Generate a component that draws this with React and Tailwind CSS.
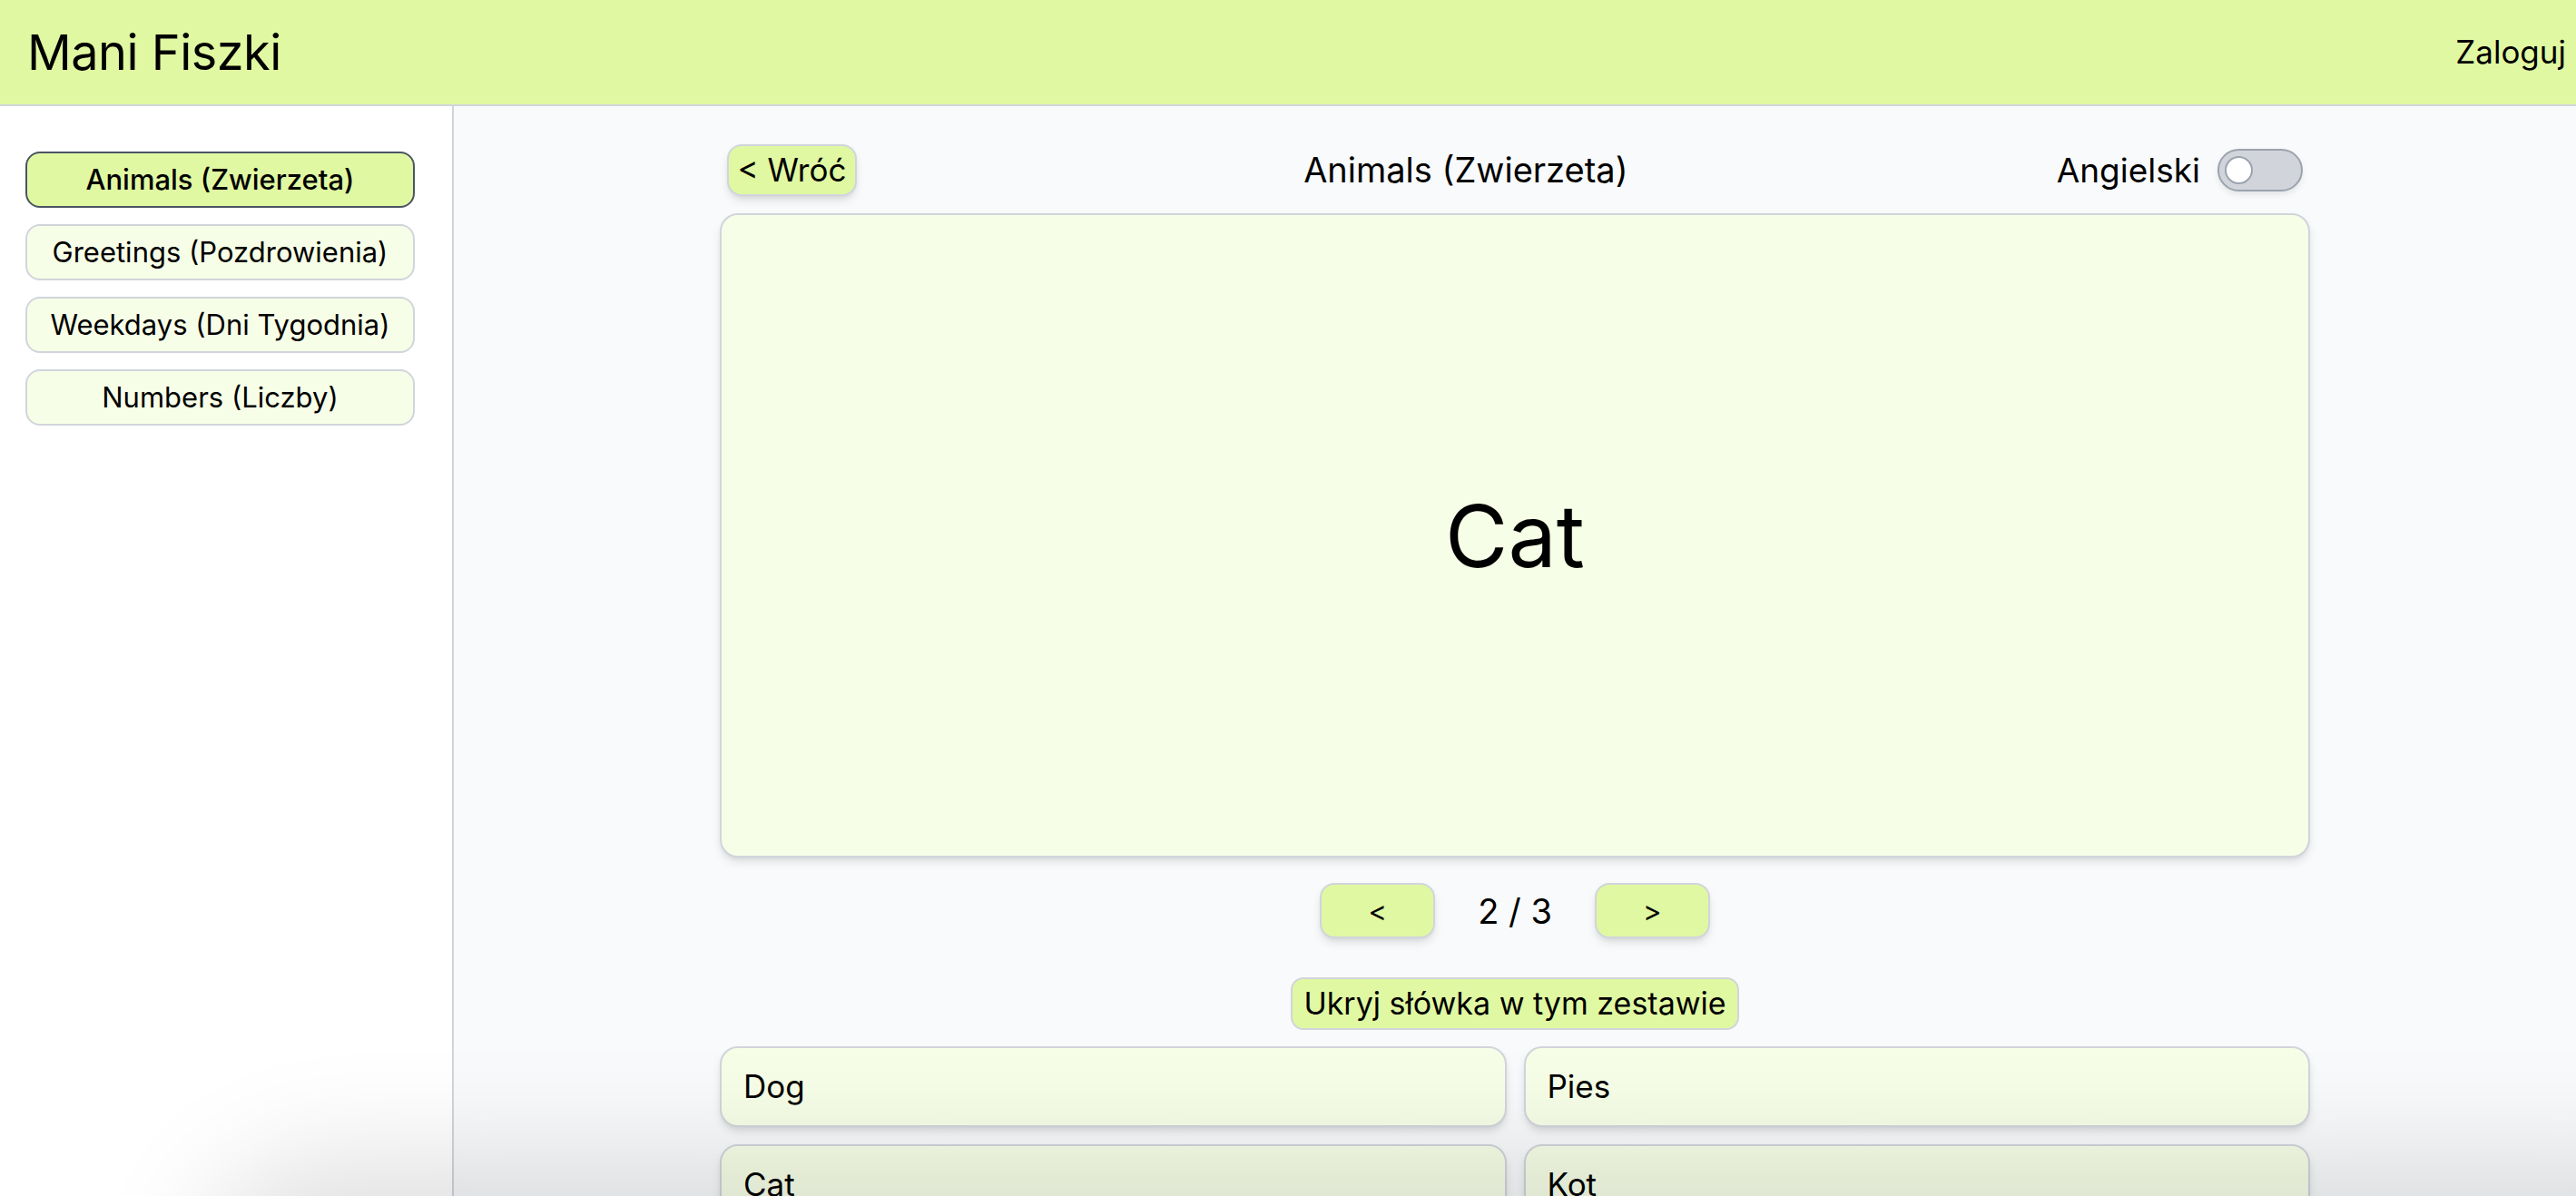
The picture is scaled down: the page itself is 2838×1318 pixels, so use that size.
import React from "react";

const sets = [
  { name: "Animals (Zwierzeta)", active: true },
  { name: "Greetings (Pozdrowienia)" },
  { name: "Weekdays (Dni Tygodnia)" },
  { name: "Numbers (Liczby)" },
];

const words = [
  ["Dog", "Pies"],
  ["Cat", "Kot"],
  ["Bird", "Ptak"],
];

export default function App() {
  return (
    <div className="font-['Inter',sans-serif] text-black min-h-screen bg-[#f9fafb] overflow-hidden">
      <header className="flex items-center justify-between h-[117px] border-b-2 border-[#d1d5db] bg-[#e0f8a2] pl-[30px] pr-[11px]">
        <h1 className="text-[54px] leading-none tracking-[-0.5px]">Mani Fiszki</h1>
        <button className="text-[35px] leading-none">Zaloguj</button>
      </header>
      <div className="flex min-h-[1201px]">
        <aside className="w-[500px] shrink-0 bg-white border-r-2 border-[#d1d5db] pt-[50px] pl-[28px] flex flex-col gap-[18px]">
          {sets.map((s) => (
            <button
              key={s.name}
              className={
                s.active
                  ? "w-[429px] h-[62px] rounded-[16px] border-2 border-[#4b5563] bg-[#e0f8a2] text-[31px] font-medium flex items-center justify-center"
                  : "w-[429px] h-[62px] rounded-[16px] border-2 border-[#d1d5db] bg-[#f7fee7] text-[31px] flex items-center justify-center"
              }
            >
              {s.name}
            </button>
          ))}
        </aside>
        <main className="flex-1 bg-[#f9fafb]">
          <div className="w-[1752px] mx-auto pt-[41px]">
            <div className="h-[58px] flex items-center justify-between px-[8px]">
              <button className="h-[57px] w-[143px] rounded-[16px] border-2 border-[#d1d5db] bg-[#e0f8a2] text-[35px] leading-none shadow-[0_6px_12px_-2px_rgba(0,0,0,0.12),0_3px_6px_-3px_rgba(0,0,0,0.1)]">
                &lt; Wróć
              </button>
              <h2 className="text-[38px] leading-none ml-[20px]">Animals (Zwierzeta)</h2>
              <div className="flex items-center gap-[19px]">
                <span className="text-[37px] leading-none">Angielski</span>
                <div className="w-[94px] h-[47px] rounded-full bg-[#d1d5db] border-2 border-[#9ca3af] flex items-center pl-[6px] shadow-[0_4px_8px_-2px_rgba(0,0,0,0.12)]">
                  <div className="w-[31px] h-[31px] rounded-full bg-white border-2 border-[#9ca3af]"></div>
                </div>
              </div>
            </div>
            <div className="mt-[19px] h-[710px] rounded-[20px] border-2 border-[#d1d5db] bg-[#f7fee7] flex items-center justify-center shadow-[0_6px_12px_-2px_rgba(0,0,0,0.12),0_3px_6px_-3px_rgba(0,0,0,0.1)]">
              <span className="text-[95px] leading-none">Cat</span>
            </div>
            <div className="mt-[28px] flex items-center justify-center gap-[47px]">
              <button className="w-[127px] h-[61px] rounded-[16px] border-2 border-[#d1d5db] bg-[#e0f8a2] text-[31px] leading-none shadow-[0_6px_12px_-2px_rgba(0,0,0,0.12),0_3px_6px_-3px_rgba(0,0,0,0.1)]">
                &lt;
              </button>
              <span className="text-[38px] leading-none">2 / 3</span>
              <button className="w-[127px] h-[61px] rounded-[16px] border-2 border-[#d1d5db] bg-[#e0f8a2] text-[31px] leading-none shadow-[0_6px_12px_-2px_rgba(0,0,0,0.12),0_3px_6px_-3px_rgba(0,0,0,0.1)]">
                &gt;
              </button>
            </div>
            <div className="mt-[43px] flex justify-center">
              <button className="h-[58px] w-[494px] rounded-[14px] border-2 border-[#d1d5db] bg-[#e0f8a2] text-[34px] leading-none">
                Ukryj słówka w tym zestawie
              </button>
            </div>
            <div className="mt-[18px] grid grid-cols-2 gap-[19px]">
              {words.map(([en, pl]) => (
                <React.Fragment key={en}>
                  <div className="h-[89px] rounded-[20px] border-2 border-[#d1d5db] bg-[#f7fee7] flex items-center pl-[24px] text-[35px] shadow-[0_6px_12px_-2px_rgba(0,0,0,0.12),0_3px_6px_-3px_rgba(0,0,0,0.1)]">
                    {en}
                  </div>
                  <div className="h-[89px] rounded-[20px] border-2 border-[#d1d5db] bg-[#f7fee7] flex items-center pl-[24px] text-[35px] shadow-[0_6px_12px_-2px_rgba(0,0,0,0.12),0_3px_6px_-3px_rgba(0,0,0,0.1)]">
                    {pl}
                  </div>
                </React.Fragment>
              ))}
            </div>
          </div>
        </main>
      </div>
      <div className="fixed left-[260px] right-[-200px] top-[100vh] h-[200px] rounded-[100px] bg-black shadow-[0_0_130px_40px_rgba(0,0,0,0.13)] pointer-events-none"></div>
    </div>
  );
}
